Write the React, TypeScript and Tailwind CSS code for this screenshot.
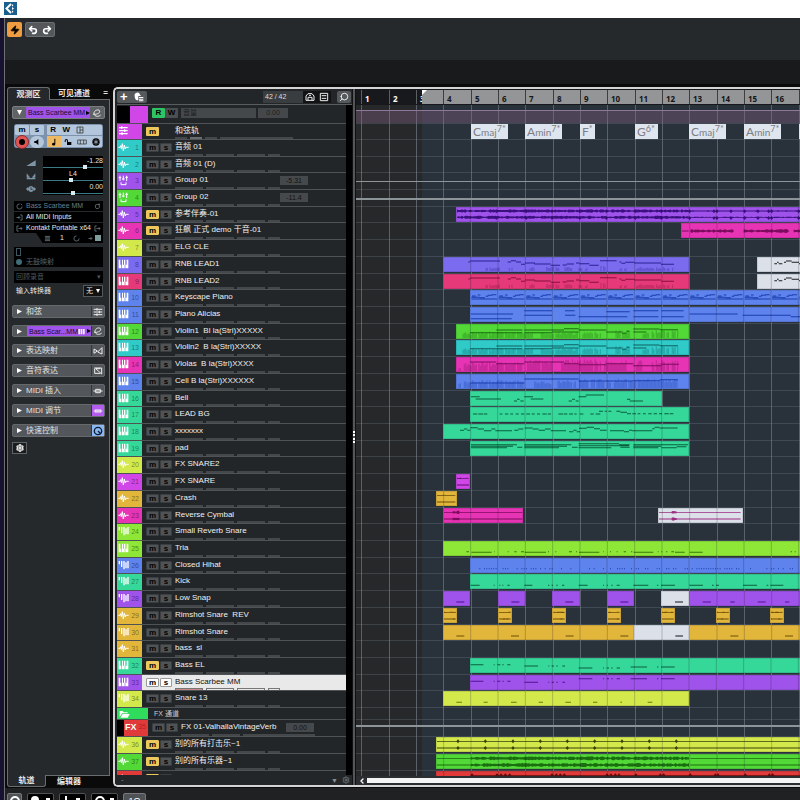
import type { ReactNode } from 'react';
import { ChevronLeft, Redo2, Search, Settings, Undo2, Zap } from 'lucide-react';

// Clip positions are in ticks: three to a pixel, 82 to a bar, bar 4 at tick 40.
const ORIGIN = 74;
const END = 2400;
const px = (tick: number) => Math.round(ORIGIN + tick / 3);
const barTick = (bar: number) => 40 + (bar - 4) * 82;
const BARS = Array.from({ length: 32 }, (_, i) => i + 1);
const LAST_NUMBERED_BAR = 16;

const noise = (n: number) => {
    const v = Math.sin(n * 12.9898) * 43758.5453;
    return v - Math.floor(v);
};

const TONES = {
    cyan: { bg: 'bg-[#30cbc9]', ink: '#0f6160' },
    purple: { bg: 'bg-[#a053ea]', ink: '#4f1694' },
    green: { bg: 'bg-[#52d837]', ink: '#1a6e10' },
    magenta: { bg: 'bg-[#e634b4]', ink: '#7d0c5e' },
    yellow: { bg: 'bg-[#d3e84a]', ink: '#6d7a10' },
    indigo: { bg: 'bg-[#7b6bee]', ink: '#2c2396' },
    crimson: { bg: 'bg-[#e5397a]', ink: '#8a103f' },
    blue: { bg: 'bg-[#5e83ec]', ink: '#1a3fae' },
    mint: { bg: 'bg-[#36d89a]', ink: '#0a5f3d' },
    orchid: { bg: 'bg-[#d046e6]', ink: '#5e0f6c' },
    gold: { bg: 'bg-[#e2b63a]', ink: '#6b4e08' },
    lime: { bg: 'bg-[#8ee636]', ink: '#3d7a0c' },
    red: { bg: 'bg-[#e03a3a]', ink: '#5f0d0d' },
    white: { bg: 'bg-[#dce1e9]', ink: '#1c1e22' },
};
type Tone = keyof typeof TONES;

type Wave = { from: number; to: number; y: number; amp: number };
type Clip = {
    from: number;
    to: number;
    tone?: Tone;
    ink?: string;
    notes?: number[][];
    bars?: number[][];
    waves?: Wave[];
    marks?: number[];
};
type Icon = 'wave' | 'keys' | 'group' | 'drum' | 'chord';
type Track = {
    n: number;
    name: string;
    tone: Tone;
    icon: Icon;
    muted?: boolean;
    selected?: boolean;
    value?: string;
    line?: string;
    clips?: Clip[];
};

const stereo = (from: number, to: number, amp = 2): Wave[] => [
    { from, to, y: 13, amp },
    { from, to, y: 33, amp },
];
const dots = (from: number, to: number, y: number, every: number, keep: number) => {
    const out: number[][] = [];
    for (let x = from; x < to; x += every) if (noise(x) < keep) out.push([x, x + 3, y]);
    return out;
};
const dashes = (from: number, to: number, y: number) => {
    const out: number[][] = [];
    for (let x = from; x < to; x += 16) if (noise(x) < 0.85) out.push([x, x + 7 + Math.round(noise(x + 1) * 7), y]);
    return out;
};

const leadNotes = [
    [115, 120, 15], [120, 210, 12], [233, 243, 15], [243, 258, 11], [258, 273, 15], [273, 285, 22], [285, 315, 18],
    [313, 362, 21], [362, 390, 25], [398, 410, 24], [410, 432, 21], [438, 448, 18], [448, 478, 20], [478, 506, 25],
    [510, 560, 11], [568, 574, 15], [574, 586, 19], [586, 613, 16], [613, 693, 18], [693, 732, 22],
];
const leadBars = [
    [168, 212, 11], [238, 250, 11], [300, 314, 13], [350, 390, 14], [405, 430, 13], [447, 482, 11], [509, 527, 16],
    [570, 578, 11], [584, 590, 11], [620, 695, 11], [700, 732, 11],
];
const leadTail = [
    [1033, 1041, 20], [1041, 1046, 16], [1046, 1057, 20], [1062, 1068, 16], [1068, 1085, 12], [1085, 1107, 16],
    [1107, 1130, 20],
];
const pianoNotes = BARS.slice(4).flatMap((bar) => {
    const t = barTick(bar);
    return [
        [t + 3, t + 80, 27], [t + 3, t + 28, 22], [t + 5, t + 16, 18], [t + 22, t + 30, 15], [t + 28, t + 44, 23],
        [t + 46, t + 54, 19], [t + 52, t + 66, 16], [t + 64, t + 78, 14],
    ];
});
const violinNotes = [
    [121, 200, 26], [200, 278, 18], [200, 278, 26], [284, 367, 26], [284, 403, 18], [367, 447, 24], [403, 447, 14],
    [447, 530, 18], [530, 577, 24], [577, 590, 28], [590, 600, 22], [611, 690, 15], [611, 650, 24], [690, 745, 17],
];
const violinBars = [[100, 310, 19], [335, 445, 18], [460, 515, 18], [555, 600, 25], [640, 660, 18], [668, 745, 24]];
const groove = [
    [123, 161], [192, 195], [203, 212], [218, 222], [233, 242], [284, 325], [356, 359], [366, 373], [380, 384],
    [398, 406], [447, 488], [520, 523], [531, 538], [545, 549], [561, 571], [603, 652], [682, 686], [694, 735],
];
const repeat = (from: number, step: number, count: number, width: number, y: number) =>
    Array.from({ length: count }, (_, i) => [from + i * step, from + i * step + width, y]);

const TRACKS: Track[] = [
    { n: 1, name: '音频 01', tone: 'cyan', icon: 'wave' },
    { n: 2, name: '音频 01 (D)', tone: 'cyan', icon: 'wave' },
    { n: 3, name: 'Group 01', tone: 'purple', icon: 'group', value: '-5.31', line: 'mt-2 h-px' },
    { n: 4, name: 'Group 02', tone: 'green', icon: 'group', value: '-11.4', line: 'mt-2 h-0.5' },
    {
        n: 5, name: '参考伴奏-01', tone: 'purple', icon: 'wave', muted: true,
        clips: [{
            from: 79, to: END, ink: '#3b1180',
            waves: [
                { from: 82, to: 780, y: 12, amp: 5 }, { from: 82, to: 780, y: 31, amp: 5 },
                { from: 780, to: END, y: 12, amp: 2 }, { from: 780, to: END, y: 31, amp: 2 },
            ],
            marks: [200, 290, 367, 450, 530, 617, 695, 780, 853, 862, 904, 945, 985, 1017, 1026, 1107],
        }],
    },
    {
        n: 6, name: '狂飙 正式 demo 干音-01', tone: 'magenta', icon: 'wave', muted: true,
        clips: [{
            from: 752, to: END,
            waves: [
                { from: 755, to: 776, y: 24, amp: 1 }, { from: 780, to: 912, y: 24, amp: 6 },
                { from: 940, to: 1076, y: 24, amp: 6 }, { from: 1090, to: END, y: 24, amp: 5 },
            ],
        }],
    },
    { n: 7, name: 'ELG CLE', tone: 'yellow', icon: 'wave' },
    {
        n: 8, name: 'RNB LEAD1', tone: 'indigo', icon: 'keys',
        clips: [{ from: 39, to: 776, notes: leadNotes, bars: leadBars }, { from: 981, to: END, tone: 'white', notes: leadTail }],
    },
    {
        n: 9, name: 'RNB LEAD2', tone: 'crimson', icon: 'keys',
        clips: [{ from: 39, to: 776, notes: leadNotes, bars: leadBars }, { from: 981, to: END, tone: 'white', notes: leadTail }],
    },
    { n: 10, name: 'Keyscape Piano', tone: 'blue', icon: 'keys', clips: [{ from: 121, to: END, notes: pianoNotes }] },
    {
        n: 11, name: 'Piano Alicias', tone: 'blue', icon: 'keys',
        clips: [{
            from: 121, to: END,
            notes: [
                [124, 250, 21], [124, 246, 35], [284, 367, 11], [284, 367, 25], [406, 435, 11], [406, 437, 25],
                [447, 593, 29], [530, 600, 14], [611, 686, 11], [611, 686, 29], [695, 762, 11], [695, 762, 29],
                [780, 924, 21], [939, 1083, 25], [1083, 1120, 29],
            ],
        }],
    },
    {
        n: 12, name: 'Violin1  Bl la(Stri)XXXXX', tone: 'green', icon: 'keys',
        clips: [{ from: 79, to: 776, notes: violinNotes, bars: violinBars }],
    },
    {
        n: 13, name: 'Violin2  B la(Stri)XXXXX', tone: 'cyan', icon: 'keys',
        clips: [{ from: 79, to: 776, notes: violinNotes, bars: violinBars }],
    },
    {
        n: 14, name: 'Violas  B la(Stri)XXXX', tone: 'magenta', icon: 'keys',
        clips: [{
            from: 79, to: 776,
            notes: [
                [121, 200, 15], [200, 284, 20], [284, 403, 15], [403, 447, 20], [447, 530, 23], [530, 611, 20],
                [611, 695, 26], [695, 748, 22],
            ],
            bars: [[88, 96, 11], [104, 280, 27], [290, 368, 34], [396, 515, 36], [525, 590, 32], [620, 640, 32], [668, 745, 32]],
        }],
    },
    {
        n: 15, name: 'Cell B la(Stri)XXXXXX', tone: 'blue', icon: 'keys',
        clips: [{
            from: 79, to: 776,
            notes: [[121, 284, 27], [284, 447, 15], [447, 611, 21], [611, 690, 20], [690, 745, 17]],
            bars: [[88, 96, 18], [104, 282, 24], [315, 365, 20], [385, 445, 24], [450, 745, 28]],
        }],
    },
    {
        n: 16, name: 'Bell', tone: 'mint', icon: 'keys',
        clips: [{
            from: 121, to: 695,
            notes: [
                [124, 150, 17], [138, 214, 24], [253, 262, 30], [262, 270, 25], [272, 282, 30], [284, 310, 17],
                [303, 341, 24], [417, 427, 30], [427, 436, 25], [438, 447, 30], [447, 470, 17], [468, 523, 12],
                [592, 602, 25], [600, 640, 30],
            ],
        }],
    },
    {
        n: 17, name: 'LEAD BG', tone: 'mint', icon: 'keys',
        clips: [{
            from: 121, to: 776,
            notes: [...dashes(130, 500, 21), [508, 520, 13], [525, 532, 13], [536, 545, 13], [560, 572, 13], [572, 592, 16], ...dashes(592, 750, 20)],
        }],
    },
    {
        n: 18, name: 'xxxxxxx', tone: 'mint', icon: 'keys',
        clips: [{
            from: 39, to: 776,
            notes: [
                [90, 102, 19], [102, 112, 15], [112, 121, 19], [121, 143, 11], [143, 162, 15], [162, 184, 20],
                [184, 196, 15], [196, 246, 20], [253, 265, 19], [265, 280, 15], [284, 308, 12], [308, 326, 15],
                [326, 345, 19], [345, 362, 15], [362, 408, 20], [417, 430, 23], [430, 440, 19], [440, 450, 23],
                [447, 470, 13], [470, 492, 10], [492, 510, 14], [510, 530, 19], [540, 582, 20], [582, 597, 23],
                [597, 606, 19], [606, 667, 20], [667, 674, 14], [674, 688, 10], [688, 743, 12],
            ],
        }],
    },
    {
        n: 19, name: 'pad', tone: 'mint', icon: 'keys',
        clips: [{
            from: 121, to: 776,
            notes: [
                [124, 262, 11], [124, 250, 16], [124, 232, 20], [263, 278, 19], [284, 425, 11], [284, 412, 16],
                [284, 388, 20], [427, 444, 19], [447, 568, 8], [447, 598, 14], [447, 545, 20], [568, 600, 11],
                [572, 600, 19], [611, 775, 11], [611, 695, 16], [611, 686, 20], [695, 741, 20], [741, 770, 17],
            ],
        }],
    },
    { n: 20, name: 'FX SNARE2', tone: 'yellow', icon: 'wave' },
    { n: 21, name: 'FX SNARE', tone: 'orchid', icon: 'wave', clips: [{ from: 79, to: 121, waves: stereo(82, 119) }] },
    { n: 22, name: 'Crash', tone: 'gold', icon: 'wave', clips: [{ from: 17, to: 80, waves: stereo(20, 77) }] },
    {
        n: 23, name: 'Reverse Cymbal', tone: 'magenta', icon: 'wave',
        clips: [
            { from: 39, to: 280, waves: [...stereo(42, 277, 1), ...stereo(68, 92, 5)] },
            { from: 683, to: 938, tone: 'white', ink: '#9c2c80', waves: [...stereo(686, 934, 1), ...stereo(724, 740, 5)] },
        ],
    },
    { n: 24, name: 'Small Reverb Snare', tone: 'lime', icon: 'drum' },
    {
        n: 25, name: 'Tria', tone: 'lime', icon: 'keys',
        clips: [{
            from: 39, to: END,
            notes: [
                [109, 117, 32], [124, 185, 34], [192, 194, 32], [233, 236, 32], [253, 260, 32], [273, 282, 32],
                [284, 348, 34], [354, 357, 32], [376, 379, 32], [417, 426, 32], [438, 441, 32], [447, 508, 34],
                [520, 522, 32], [540, 543, 32], [560, 563, 32], [581, 588, 32], [603, 607, 32], [611, 670, 34],
                [683, 686, 32], [694, 697, 32], [708, 712, 32], [724, 732, 32], [735, 764, 34], [779, 818, 34],
                [1082, 1086, 32], [1094, 1097, 32],
            ],
        }],
    },
    { n: 26, name: 'Closed Hihat', tone: 'blue', icon: 'drum', clips: [{ from: 121, to: END, notes: dots(142, END, 32, 7, 0.55) }] },
    {
        n: 27, name: 'Kick', tone: 'mint', icon: 'drum',
        clips: [{
            from: 121, to: END,
            notes: [
                [123, 150, 34], [192, 195, 34], [209, 212, 34], [218, 221, 34], [233, 240, 34], [284, 308, 34],
                [355, 359, 34], [366, 370, 34], [380, 384, 34], [397, 404, 34], [447, 474, 34], [520, 523, 34],
                [531, 535, 34], [545, 549, 34], [561, 570, 34], [611, 656, 34], [682, 686, 34], [694, 736, 34],
                [779, 820, 34], [847, 852, 34], [859, 868, 34], [940, 982, 34], [1011, 1016, 34], [1022, 1061, 34],
            ],
        }],
    },
    {
        n: 28, name: 'Low Snap', tone: 'purple', icon: 'drum',
        clips: [
            ...[39, 203, 367, 531].map((t) => ({ from: t, to: t + 82, notes: [[t + 40, t + 64, 33]] })),
            { from: 694, to: 776, tone: 'white', notes: [[736, 760, 33]] },
            { from: 776, to: END, notes: [[817, 842, 33], [900, 913, 33], [982, 1006, 33], [1064, 1077, 33]] },
        ],
    },
    {
        n: 29, name: 'Rimshot Snare  REV', tone: 'gold', icon: 'wave',
        clips: [39, 203, 367, 531, 694, 858, 1021].map((t) => ({ from: t, to: t + 42, waves: stereo(t + 3, t + 38) })),
    },
    {
        n: 30, name: 'Rimshot Snare', tone: 'gold', icon: 'drum',
        clips: [
            { from: 39, to: 612, notes: repeat(79, 164, 4, 24, 33) },
            { from: 612, to: 776, tone: 'white', notes: [[736, 759, 33]] },
            { from: 776, to: END, notes: repeat(900, 164, 6, 24, 33) },
        ],
    },
    { n: 31, name: 'bass  sl', tone: 'gold', icon: 'wave' },
    {
        n: 32, name: 'Bass EL', tone: 'mint', icon: 'keys', muted: true,
        clips: [{ from: 121, to: END, notes: groove.map(([a, b]) => [a, b, a < 280 ? 20 : a < 440 ? 24 : a < 600 ? 30 : 27]) }],
    },
    {
        n: 33, name: 'Bass Scarbee MM', tone: 'purple', icon: 'keys', selected: true,
        clips: [{ from: 121, to: END, notes: groove.map(([a, b]) => [a, b, a < 280 ? 19 : a < 440 ? 22 : 11]) }],
    },
    {
        n: 34, name: 'Snare 13', tone: 'yellow', icon: 'drum',
        clips: [{
            from: 39, to: 777,
            notes: [
                [79, 96, 34], [161, 173, 34], [243, 260, 34], [326, 339, 34], [406, 423, 34], [489, 502, 34],
                [571, 576, 34], [653, 667, 34],
            ],
        }],
    },
];

const FX_TRACK: Track = { n: 35, name: 'FX 01-ValhallaVintageVerb', tone: 'red', icon: 'wave', value: '0.00', line: 'mt-[5px] h-0.5' };

const SUBMIX: Track[] = [
    {
        n: 36, name: '别的所有打击乐~1', tone: 'yellow', icon: 'wave', muted: true,
        clips: [{ from: 17, to: END, ink: '#3a420a', waves: stereo(20, END, 1), marks: [83, 165, 248, 330, 411, 493, 575, 657, 738] }],
    },
    {
        n: 37, name: '别的所有乐器~1', tone: 'green', icon: 'wave', muted: true,
        clips: [{ from: 17, to: END, waves: [...stereo(20, 121, 1), ...stereo(121, 780, 6), ...stereo(780, END, 1)] }],
    },
    {
        n: 38, name: 'Kick71', tone: 'red', icon: 'wave', muted: true,
        clips: [{ from: 17, to: END, waves: stereo(121, END, 1), marks: [125, 200, 212, 225, 238, 365, 378, 390, 402, 530, 542, 555, 566, 617, 690, 700, 780, 855, 863, 945, 1017, 1027] }],
    },
];

// Tracks average a bit under 17px, so two rows in seven are a pixel shorter.
const rowHeight = (n: number) => (n < 35 && [1, 4].includes((n - 1) % 7) ? 'h-4' : 'h-[17px]');

const wavePath = ({ from, to, y, amp }: Wave) => {
    let top = `M${from} ${y}`;
    let bottom = '';
    for (let x = from; x <= to; x += 5) {
        const a = Math.max(1.3, amp * (0.3 + 0.7 * noise(x + y)));
        top += `L${x} ${(y - a).toFixed(1)}`;
        bottom = `L${x} ${(y + a).toFixed(1)}` + bottom;
    }
    return top + bottom + 'Z';
};

const ClipView = ({ clip, tone }: { clip: Clip; tone: Tone }) => {
    const { bg, ink } = TONES[clip.tone ?? tone];
    const color = clip.ink ?? ink;
    const left = px(clip.from);
    const width = px(clip.to) - left;
    const marks = clip.marks ?? [];
    return (
        <div className={`absolute top-0 h-[15px] ${bg}`} style={{ left, width }}>
            <svg className="block" width={width} height={15} viewBox={`${clip.from} 0 ${width * 3} 45`} preserveAspectRatio="none">
                {clip.bars?.map(([from, to, h]) => {
                    let d = '';
                    for (let x = from; x < to; x += 4) {
                        if (noise(x * 3) > 0.12) d += `M${x} 42V${Math.round(42 - h * (0.55 + 0.45 * noise(x)))}`;
                    }
                    return <path key={from} d={d} stroke={color} strokeWidth={3.4} opacity={0.32} />;
                })}
                {clip.waves?.map((w) => <path key={`${w.from}-${w.y}`} d={wavePath(w)} fill={color} />)}
                {marks.map((x) => (
                    <path key={x} d={`M${x - 5} 13l5-6 5 6-5 6ZM${x - 5} 33l5-6 5 6-5 6Z`} fill={color} />
                ))}
                <path d={clip.notes?.map(([a, b, y]) => `M${a} ${y}H${b}`).join('')} stroke={color} strokeWidth={3.2} fill="none" />
                {BARS.map(barTick).filter((t) => t > clip.from + 4 && t < clip.to - 4).map((t) => (
                    <path key={t} d={`M${t} 0V45`} stroke="#101020" strokeWidth={3} opacity={0.22} />
                ))}
                <rect x={clip.from + 1} y={1} width={width * 3 - 2} height={43} fill="none" stroke="#101020" strokeWidth={2} opacity={0.18} />
            </svg>
        </div>
    );
};

const TrackIcon = ({ icon }: { icon: Icon }) => (
    <svg className="ml-px mt-px h-3 w-[11px] shrink-0" viewBox="0 0 33 36" fill="none" stroke="#fff" strokeWidth={3}>
        {icon === 'wave' && <path d="M1 19h5l2-5 2 9 3-15 3 22 3-18 3 12 2-6 2 1h6" strokeWidth={3} />}
        {icon === 'keys' && <path fill="#fff" stroke="none" d="M2 5h5v15h3v11H2zM12 5h3v15h3V5h4v15h-2v11h-8zM26 5h5v26h-9V20h4z" />}
        {icon === 'drum' && <path d="M4 6v10M11 6v18M18 6v25M24 10v18M30 6v22" strokeWidth={4} />}
        {icon === 'group' && <path d="M6 5v16M16 5v14M26 5v16M2 11h8M12 15h8M22 10h8M9 25v7h15v-7" />}
        {icon === 'chord' && <path d="M3 8h26M3 17h26M3 26h26M11 4v8M20 13v8M12 22v8" strokeWidth={4} />}
    </svg>
);

const MuteSolo = ({ muted, selected, name }: { muted?: boolean; selected?: boolean; name: string }) => {
    const idle = selected ? 'bg-white border-[#999]' : 'bg-[#505355] border-[#3b3e40]';
    return (
        <div className="mt-[3px] flex h-[9px] gap-px">
            <button aria-label={`Mute ${name}`} className={`flex w-[13px] items-center justify-center rounded-[1px] border text-[8px] leading-none font-bold text-black ${muted ? 'bg-[#ecc85c] border-[#ecc85c]' : idle}`}>
                m
            </button>
            <button aria-label={`Solo ${name}`} className={`flex w-3 items-center justify-center rounded-[1px] border text-[8px] leading-none font-bold text-black ${idle}`}>
                s
            </button>
        </div>
    );
};

const ValueBox = ({ value }: { value: string }) => (
    <span className="mt-[3px] h-[9px] w-7 bg-[#46494b] text-center text-[7px] leading-[9px] text-[#111]">{value}</span>
);

const Strips = ({ selected }: { selected?: boolean }) => (
    <div className="absolute bottom-0 left-[58px] flex h-0.5 gap-[3px]">
        <i className={`w-7 ${selected ? 'border-x border-t border-[#777] bg-[#c98a8a]' : 'bg-[#45484a]'}`} />
        <i className={`w-7 ${selected ? 'border-x border-t border-[#777]' : 'bg-[#45484a]'}`} />
        <i className={`w-7 ${selected ? 'border-x border-t border-[#777]' : 'bg-[#45484a]'}`} />
        <i className={`w-3 ${selected ? 'border-x border-t border-[#777]' : 'bg-[#45484a]'}`} />
    </div>
);

const TrackRow = ({ track }: { track: Track }) => (
    <div className={`relative flex shrink-0 border-t border-[#505356] ${rowHeight(track.n)} ${track.selected ? 'bg-[#e9e9e9] text-[#111]' : 'text-[#f0f0f0]'}`}>
        <div className={`flex w-[25px] justify-between pr-[3px] ${TONES[track.tone].bg}`}>
            <TrackIcon icon={track.icon} />
            <span className="text-[7px] leading-[15px] text-black/45">{track.n}</span>
        </div>
        <div className="ml-1 flex">
            <MuteSolo muted={track.muted} selected={track.selected} name={track.name} />
        </div>
        <span className="ml-[3px] grow text-[8px] leading-[13px] whitespace-pre">{track.name}</span>
        {track.value && <div className="mr-[38px] flex"><ValueBox value={track.value} /></div>}
        <Strips selected={track.selected} />
    </div>
);

const TrackList = () => (
    <section className="flex w-[237px] shrink-0 flex-col bg-[#232628] pl-0.5">
        <header className="flex h-4 shrink-0 items-center border-b border-[#5a5d60] pr-px">
            <div className="flex h-3 w-[30px] items-center justify-around rounded-xs bg-[#56595c] text-white">
                <button aria-label="Add track" className="text-[13px] leading-none font-bold">+</button>
                <button aria-label="Track presets">
                    <svg className="h-2.5 w-2.5" viewBox="0 0 30 30" fill="#fff">
                        <path d="M2 12a8 8 0 0 1 16-4l3 4h-8v13H9c-5-2-7-7-7-13z" />
                        <path d="M15 15h13v3H15zM15 20h13v3H15zM15 25h13v3H15z" />
                    </svg>
                </button>
            </div>
            <span className="ml-auto h-3 w-10 bg-[#3a3d40] pl-0.5 text-[7px] leading-3 text-[#ddd]">42 / 42</span>
            <div className="flex h-3 w-7 items-center justify-around bg-[#111315]">
                <button aria-label="Track visibility">
                    <svg className="h-2.5 w-2.5" viewBox="0 0 30 30" fill="none" stroke="#eee" strokeWidth={3}>
                        <path d="M3 25V12l6-7h12l6 7v13zM9 25v-9h12v9M12 10h6" />
                    </svg>
                </button>
                <button aria-label="Track divider">
                    <svg className="h-2.5 w-2.5" viewBox="0 0 30 30" fill="none" stroke="#eee" strokeWidth={3}>
                        <path d="M4 4h22v22H4zM8 11h14M8 19h14" />
                    </svg>
                </button>
            </div>
            <button aria-label="Find track" className="ml-1.5 flex h-3 w-3.5 items-center justify-center rounded-xs bg-[#56595c] text-white">
                <Search className="h-2.5 w-2.5 -scale-x-100" />
            </button>
        </header>
        <div className="flex min-h-0 grow overflow-hidden">
            <div className="flex min-w-0 grow flex-col">
                <div className="flex h-[18px] shrink-0 bg-[#232628] pt-px">
                    <div className="w-[13px] bg-black" />
                    <div className="w-[18px] bg-[#d046e6]" />
                    <button aria-label="Read automation" className="mt-0.5 ml-1 h-2.5 w-[13px] rounded-[1px] bg-[#2fc463] text-[8px] leading-[10px] font-bold text-black">R</button>
                    <button aria-label="Write automation" className="mt-0.5 h-2.5 w-[13px] rounded-[1px] bg-[#4c4f51] text-[8px] leading-[10px] font-bold text-black">W</button>
                    <span className="mt-0.5 ml-[3px] h-2.5 w-[75px] bg-[#45484a] pl-0.5 text-[7px] leading-[10px] text-[#1c1e1f]">音量</span>
                    <span className="mt-0.5 ml-0.5 h-2.5 w-[30px] bg-[#45484a] text-center text-[7px] leading-[10px] text-[#1c1e1f]">0.00</span>
                </div>
                <div className="relative flex h-4 shrink-0 border-t border-[#505356]">
                    <div className="w-[25px] bg-[#d046e6]"><TrackIcon icon="chord" /></div>
                    <button aria-label="Mute chord track" className="mt-[3px] ml-1 h-[9px] w-[13px] rounded-[1px] bg-[#ecc85c] text-[8px] leading-[8px] font-bold text-black">m</button>
                    <span className="ml-4 text-[8px] leading-[13px] text-[#f0f0f0]">和弦轨</span>
                    <div className="absolute bottom-0 left-[58px] flex h-0.5 gap-[3px]">
                        <i className="w-3 bg-[#45484a]" />
                        <i className="w-3 bg-[#6a6d70]" />
                        <i className="w-3 bg-[#45484a]" />
                        <i className="w-[73px] bg-[#45484a]" />
                    </div>
                </div>
                {TRACKS.map((t) => <TrackRow key={t.n} track={t} />)}
                <div className="flex h-3 shrink-0 border-t border-[#505356]">
                    <div className="flex w-[31px] items-center bg-[#2fdc5c] pl-0.5">
                        <svg className="h-2.5 w-[11px]" viewBox="0 0 33 30" fill="#fff">
                            <path d="M2 25V6h9l3 4h12v3H9z" />
                            <path d="M11 15h21l-6 11H4z" />
                        </svg>
                    </div>
                    <span className="ml-1.5 text-[7px] leading-[11px] text-[#ccc]">FX 通道</span>
                </div>
                <div className="relative flex h-[17px] shrink-0 border-t border-[#505356] text-[#f0f0f0]">
                    <div className="w-[7px] bg-black" />
                    <div className="flex w-6 justify-between bg-[#e03a3a] pr-0.5 pl-px">
                        <b className="text-[9px] leading-[14px] text-white">FX</b>
                        <span className="text-[7px] leading-[14px] text-black/30">35</span>
                    </div>
                    <div className="ml-1"><MuteSolo name={FX_TRACK.name} /></div>
                    <span className="ml-[3px] w-[105px] text-[8px] leading-[13px] whitespace-nowrap">{FX_TRACK.name}</span>
                    <ValueBox value="0.00" />
                    <div className="absolute bottom-0 left-16 flex h-0.5 gap-[3px]">
                        <i className="w-7 bg-[#45484a]" />
                        <i className="w-7 bg-[#45484a]" />
                        <i className="w-[72px] bg-[#45484a]" />
                    </div>
                </div>
                {SUBMIX.map((t) => <TrackRow key={t.n} track={t} />)}
            </div>
            <div className="w-1.5 shrink-0 bg-black" />
        </div>
        <footer className="flex h-2.5 shrink-0 items-center pr-0.5 text-[#8a8d90]">
            <span className="ml-1 text-[8px] leading-none">-</span>
            <span className="ml-auto text-[7px] leading-none">▼</span>
            <button aria-label="Track list settings" className="ml-1"><Settings className="h-2 w-2" /></button>
        </footer>
    </section>
);

const CHORDS = [
    { bar: 5, root: 'C', kind: 'maj', ext: '7', width: 'w-[37px]' },
    { bar: 7, root: 'A', kind: 'min', ext: '7', width: 'w-[37px]' },
    { bar: 9, root: 'F', kind: '', ext: '', width: 'w-[15px]' },
    { bar: 11, root: 'G', kind: '', ext: '6', width: 'w-[23px]' },
    { bar: 13, root: 'C', kind: 'maj', ext: '7', width: 'w-[37px]' },
    { bar: 15, root: 'A', kind: 'min', ext: '7', width: 'w-[37px]' },
];

const Lane = ({ height, children }: { height: string; children?: ReactNode }) => (
    <div className={`relative shrink-0 border-t border-[#8090a0]/25 ${height}`}>{children}</div>
);

const TrackLane = ({ track }: { track: Track }) => (
    <Lane height={rowHeight(track.n)}>
        {track.line && <div className={`bg-[#8d9599] ${track.line}`} />}
        {track.clips?.map((c) => <ClipView key={c.from} clip={c} tone={track.tone} />)}
    </Lane>
);

const Timeline = () => (
    <section className="flex min-w-0 grow flex-col overflow-hidden bg-[#29323a]">
        <div className="relative flex h-4 shrink-0 overflow-hidden border-y border-[#16181b]">
            <div className="w-[66px] bg-[#17191c]" />
            <div className="grow bg-[#939597]" />
            {BARS.map((bar) => (
                <span
                    key={bar}
                    className={`absolute bottom-0 h-3.5 border-l pl-[3px] font-['Noto_Sans'] text-[8px] leading-[18px] font-bold ${bar < 4 ? 'border-[#5c6064] text-white' : 'border-[#3c3e40] text-[#141618]'}`}
                    style={{ left: px(barTick(bar)) }}
                >
                    {bar <= LAST_NUMBERED_BAR && bar}
                </span>
            ))}
            <div className="absolute inset-y-0 left-[66px] w-[5px] bg-[#939597]">
                <div className="h-[5px] bg-white [clip-path:polygon(0_0,100%_0,0_100%)]" />
            </div>
        </div>
        <div className="relative flex min-h-0 grow flex-col overflow-hidden">
            <div className="absolute inset-y-0 left-0 w-[66px] bg-[#262829]" />
            {BARS.map((bar) => (
                <div key={bar} className="absolute inset-y-0 w-px bg-[#59626a]" style={{ left: px(barTick(bar)) }} />
            ))}
            <div className="relative flex h-[18px] shrink-0 flex-col pt-[5px]">
                <div className="grow border-t border-[#8d789a] bg-[#8e6490]/35" />
            </div>
            <Lane height="h-4">
                {CHORDS.map(({ bar, root, kind, ext, width }) => (
                    <div
                        key={bar}
                        className={`absolute top-0 flex h-[15px] items-baseline bg-[#dfe5ee] pl-0.5 font-[Lato] leading-[15px] text-[#7b7e85] ${width}`}
                        style={{ left: px(barTick(bar)) }}
                    >
                        <span className="text-[12px]">{root}</span>
                        <span className="text-[10px]">{kind}</span>
                        <sup className="text-[9px]">{ext}*</sup>
                    </div>
                ))}
                <div className="absolute top-0 h-[15px] w-[15px] bg-[#dfe5ee]" style={{ left: px(barTick(17)) }} />
            </Lane>
            {TRACKS.map((t) => <TrackLane key={t.n} track={t} />)}
            <Lane height="h-3" />
            <TrackLane track={FX_TRACK} />
            {SUBMIX.map((t) => <TrackLane key={t.n} track={t} />)}
        </div>
        <div className="flex h-[9px] shrink-0 items-center bg-[#2b2e31]">
            <button aria-label="Scroll left" className="w-[11px] pl-0.5 text-white"><ChevronLeft className="h-2 w-2" strokeWidth={4} /></button>
            <div className="h-[5px] grow bg-[#f4f4f4]" />
        </div>
    </section>
);

const SLIDERS = [
    { label: 'Volume', value: '-1.28', pos: 72, icon: 'M1 24L29 7v17z' },
    { label: 'Pan', value: 'L4', pos: 47, icon: 'M2 7l11 13H2zM28 7L17 20h11zM2 21h26v4H2z' },
    { label: 'Delay', value: '0.00', pos: 50, icon: 'M0 15l6-6v12zM30 15l-6-6v12zM15 6a9 9 0 1 0 .1 0zm1 3v6h4v2h-6v-8z' },
];

const EDIT_ICON = 'M3 18c8 3 22-2 20-9-3-7-17-2-17 7 1 11 14 11 20 5';
const SECTIONS = [
    { label: '和弦', tint: '', icon: 'M2 7h26M2 15h26M2 23h26M12 3v8M19 11v8M12 19v8' },
    { label: 'Bass Scar...MM', tint: '', icon: EDIT_ICON },
    { label: '表达映射', tint: '', icon: 'M3 9l10 6-10 7zM14 18L27 5v19z' },
    { label: '音符表达', tint: '', icon: 'M4 6h22v18L8 8h14M5 8v14h17' },
    { label: 'MIDI 插入', tint: '', icon: 'M1 15h7M22 15h7M8 10h14v10H8zM8 15h14' },
    { label: 'MIDI 调节', tint: 'bg-[#b45cf0]', icon: 'M2 15h26M7 10v10M12 9v12M18 9v12M23 10v10' },
    { label: '快速控制', tint: 'bg-[#8ab8f4]', icon: '' },
];

const PanelIcon = ({ d }: { d: string }) => (
    <svg className="h-2.5 w-2.5" viewBox="0 0 30 30" fill="none" stroke="#eee" strokeWidth={3}><path d={d} /></svg>
);

const Section = ({ label, tint, icon }: (typeof SECTIONS)[number]) => {
    const linked = label.startsWith('Bass');
    return (
        <div className={`flex rounded-xs border border-[#66696c] bg-[#53565a] text-[8px] leading-[11px] text-[#e2e2e2] ${linked ? 'h-3' : 'h-[13px]'}`}>
            <button className="flex min-w-0 grow items-center text-left">
                <svg className="mx-1 h-[5px] w-[5px] shrink-0" viewBox="0 0 5 5"><path d="M0 0l5 2.5L0 5z" fill="#fff" /></svg>
                {linked ? (
                    <span className="ml-px flex h-full grow items-center bg-[#a053ea] pl-0.5 text-[7px] whitespace-nowrap text-[#1c0c30]">
                        {label}
                        <svg className="h-[7px] w-[7px] shrink-0" viewBox="0 0 24 24" fill="#eee"><path d="M1 3h6v18H1zM9 3h6v18H9zM17 3h6v18h-6z" /></svg>
                        <svg className="ml-auto h-1 w-1 shrink-0" viewBox="0 0 5 5"><path d="M0 0l5 2.5L0 5z" fill="#000" /></svg>
                    </span>
                ) : label}
            </button>
            <button aria-label={`Bypass ${label}`} className={`flex w-[13px] shrink-0 items-center justify-center border-l border-[#34373a] ${tint}`}>
                {icon ? <PanelIcon d={icon} /> : (
                    <svg className="h-2.5 w-2.5" viewBox="0 0 30 30" fill="none" stroke="#0f1c30" strokeWidth={4}>
                        <circle cx="15" cy="15" r="11" /><path d="M15 15l9 9" />
                    </svg>
                )}
            </button>
        </div>
    );
};

const PanelDim = ({ d }: { d: string }) => (
    <svg className="h-[7px] w-[7px] shrink-0" viewBox="0 0 30 30" fill="none" stroke="#7a8c96" strokeWidth={3}><path d={d} /></svg>
);

const Inspector = () => (
    <aside className="mr-[3px] ml-0.5 flex w-[103px] shrink-0 flex-col pt-[3px] text-[#e6e6e6]">
        <div className="flex h-[13px] shrink-0 text-[8px] leading-[13px] font-bold">
            <button className="w-[43px] rounded-t-[3px] border-x border-t border-[#6a6d70] bg-[#26292c]">观测区</button>
            <div className="flex grow items-center border-b border-[#6a6d70]">
                <button className="ml-2">可见通道</button>
                <button aria-label="Inspector menu" className="ml-auto pr-0.5 leading-none">=</button>
            </div>
        </div>
        <div className="flex min-h-0 grow flex-col overflow-hidden border-x border-[#6a6d70] bg-[#26292c] px-1 pt-1.5">
            <div className="flex h-[13px] shrink-0 items-center rounded-xs border border-[#7a7d80] bg-[#606366]">
                <button aria-label="Collapse" className="flex w-[13px] justify-center">
                    <svg className="h-[5px] w-[5px]" viewBox="0 0 5 5"><path d="M0 0h5L2.5 5z" fill="#fff" /></svg>
                </button>
                <span className="flex h-full min-w-0 grow items-center bg-[#a053ea] pl-0.5 text-[7px] leading-none whitespace-nowrap text-[#1c0c30]">
                    Bass Scarbee MM
                    <svg className="ml-auto h-1 w-1 shrink-0" viewBox="0 0 5 5"><path d="M0 0l5 2.5L0 5z" fill="#000" /></svg>
                </span>
                <button aria-label="Edit channel" className="flex w-3.5 shrink-0 justify-center"><PanelIcon d={EDIT_ICON} /></button>
            </div>

            <div className="mx-0.5 mt-[5px] flex h-6 shrink-0 flex-col gap-px rounded-[3px] bg-[#7d93ad] p-px text-[8px] leading-[10px] font-bold text-black">
                <div className="flex h-2.5 gap-px">
                    <button className="w-3.5 rounded-[1px] bg-[#b4c6dc]">m</button>
                    <button className="w-3.5 rounded-[1px] bg-[#b4c6dc]">s</button>
                    <div className="ml-0.5 flex grow justify-around rounded-[1px] bg-[#b4c6dc]">
                        <button>R</button>
                        <button>W</button>
                        <button aria-label="Lanes">
                            <svg className="h-2 w-2" viewBox="0 0 24 24" fill="none" stroke="#222" strokeWidth={2}><path d="M3 3h18v18H3zM12 3v18M12 12h9" /></svg>
                        </button>
                        <i className="w-2" />
                    </div>
                </div>
                <div className="flex h-[11px] items-center gap-px">
                    <button aria-label="Record enable" className="-my-px flex h-[14px] w-[14px] shrink-0 items-center justify-center rounded-full border border-[#8c2a2a] bg-[#e25555]">
                        <i className="h-1.5 w-1.5 rounded-full bg-black" />
                    </button>
                    <button aria-label="Monitor" className="flex h-3 w-3.5 items-center justify-center rounded-full bg-[#b4c6dc]">
                        <svg className="h-2 w-2" viewBox="0 0 24 24"><path d="M4 9h5l7-6v18l-7-6H4z" /></svg>
                    </button>
                    <div className="ml-0.5 flex h-full grow items-center rounded-[1px] bg-[#b4c6dc]">
                        <button aria-label="Musical time base" className="flex h-full w-3.5 items-center justify-center bg-[#efb962]">
                            <svg className="h-2 w-2" viewBox="0 0 24 24"><path d="M13 2h3v17a5 4 0 1 1-3-4z" /></svg>
                        </button>
                        <button aria-label="Lock" className="flex grow justify-center">
                            <svg className="h-2 w-2" viewBox="0 0 24 24"><path d="M9 12h13v9H9zM2 12V8a5 5 0 0 1 10 0v4H9V8a2 2 0 0 0-4 0v4z" /></svg>
                        </button>
                        <button aria-label="Lane display" className="flex grow justify-center">
                            <svg className="h-2 w-2.5" viewBox="0 0 30 24" fill="none" stroke="#222" strokeWidth={2}><path d="M2 6h26v12H2zM10 6v12M20 6v12" /></svg>
                        </button>
                        <button aria-label="Freeze" className="flex grow justify-center">
                            <svg className="h-2 w-2" viewBox="0 0 24 24"><circle cx="12" cy="12" r="11" /><path d="M12 4v16M5 8l14 8M19 8L5 16" stroke="#b4c6dc" strokeWidth={2} /></svg>
                        </button>
                    </div>
                </div>
            </div>

            <div className="mx-0.5 mt-2 shrink-0">
                {SLIDERS.map((s) => (
                    <label key={s.label} className="flex h-[13px] items-center text-[7px] leading-[8px]">
                        <svg className="ml-3 h-2.5 w-2.5 shrink-0" viewBox="0 0 30 30"><path d={s.icon} fill="#7f95a6" /></svg>
                        <span className="ml-[7px] flex h-full min-w-0 grow flex-col justify-end bg-black">
                            <span className={s.value === 'L4' ? 'text-center' : 'text-right'}>{s.value}</span>
                            <input
                                type="range"
                                aria-label={s.label}
                                defaultValue={s.pos}
                                className="h-1 w-full appearance-none bg-[linear-gradient(#3a7a84,#3a7a84)] bg-[length:100%_1px] bg-center bg-no-repeat [&::-webkit-slider-thumb]:h-1 [&::-webkit-slider-thumb]:w-1 [&::-webkit-slider-thumb]:appearance-none [&::-webkit-slider-thumb]:bg-[#dceaf2]"
                            />
                        </span>
                    </label>
                ))}
            </div>

            <div className="mx-0.5 mt-1.5 shrink-0 text-[7px] leading-[10px]">
                <div className="mb-px flex h-2.5 items-center bg-black px-0.5 text-[#62808f]">
                    <PanelDim d="M15 4a11 11 0 1 0 11 11M20 3l6 6" /><span className="ml-[3px] grow">Bass Scarbee MM</span><PanelDim d="M22 10a9 9 0 1 1-7-4h10M22 2v8" />
                </div>
                <div className="mb-px flex h-2.5 items-center bg-black px-0.5">
                    <PanelDim d="M2 15h14M11 9l6 6-6 6M18 4h8v22h-8" /><span className="ml-[3px]">All MIDI Inputs</span>
                </div>
                <div className="flex h-2.5 items-center bg-black px-0.5">
                    <PanelDim d="M12 4H4v22h8M10 15h16M20 9l6 6-6 6" /><span className="ml-[3px] grow whitespace-nowrap">Kontakt Portable x64</span><PanelDim d="M12 4H4v22h8M10 15h16M20 9l6 6-6 6" />
                </div>
                <div className="ml-[22px] flex h-2.5 items-center bg-black px-2 [clip-path:polygon(0_0,100%_0,100%_100%,10%_100%)]">
                    <PanelDim d="M4 6h22M4 12h22M4 18h22M4 24h22" /><span className="mx-auto">1</span><PanelDim d="M15 4a11 11 0 1 0 11 11" /><i className="w-2" /><PanelDim d="M2 15h14M11 9l6 6-6 6" /><i className="-mr-1.5 h-1.5 w-1.5 bg-[#7f9c9c]" />
                </div>
                <div className="mt-1 flex h-2.5 items-center bg-black px-0.5"><i className="h-2 w-[5px] border border-[#3f565f]" /></div>
                <div className="flex h-2.5 items-center bg-black px-0.5 text-[#55656c]">
                    <i className="h-1.5 w-1.5 rounded-full bg-[#3f6d78]" /><span className="ml-1">无鼓映射</span>
                </div>
                <div className="mt-1 flex h-3 items-center justify-between bg-black px-0.5 text-[#4c575c]"><span>回顾录音</span><span>▾</span></div>
                <div className="mt-0.5 flex h-3 items-center justify-between pl-0.5">
                    <label htmlFor="transformer">输入转换器</label>
                    <span className="flex h-3 w-5 items-center border border-[#55585a] bg-[#111]">
                        <select id="transformer" className="w-full appearance-none pl-0.5 text-[7px] leading-[10px]"><option>无</option></select>
                        <svg className="mr-0.5 h-1 w-1 shrink-0" viewBox="0 0 5 5"><path d="M0 0h5L2.5 5z" fill="#fff" /></svg>
                    </span>
                </div>
            </div>

            <div className="mt-2 flex flex-col gap-[7px]">
                {SECTIONS.map((s) => <Section key={s.label} {...s} />)}
            </div>
            <button aria-label="Inspector settings" className="mt-[5px] flex h-3 w-[15px] shrink-0 items-center justify-center border border-[#606366] bg-[#1a1c1e]">
                <Settings className="h-2 w-2" strokeWidth={4} />
            </button>
        </div>
        <div className="mb-px flex h-3 shrink-0 text-[8px] leading-[12px] font-bold">
            <button className="w-[39px] rounded-b-[3px] border-x border-b border-[#6a6d70] bg-[#26292c]">轨道</button>
            <div className="grow border-t border-[#6a6d70] pl-[11px]"><button>编辑器</button></div>
        </div>
    </aside>
);

const App = () => (
    <div className="flex h-screen w-full overflow-hidden bg-[#17122f] font-['Liberation_Sans','Noto_Sans_CJK_SC',sans-serif] select-none">
        <div className="flex min-w-0 grow flex-col pl-1">
            <header className="-ml-1 flex h-[18px] shrink-0 bg-white pl-1">
                <svg className="mt-0.5 h-[13px] w-[13px]" viewBox="0 0 26 26">
                    <rect width="26" height="26" fill="#1b5f8e" />
                    <path d="M14 4L5 13l9 9" stroke="#fff" strokeWidth={4} fill="none" />
                    <path d="M16 10l4 3-4 3zM16 4l3 3-3 2zM16 22l3-3-3-2z" fill="#fff" />
                </svg>
            </header>
            <div className="flex min-h-0 grow flex-col border-l border-[#6d6f74] bg-[#0a0a0b]">
                <nav className="flex h-[42px] shrink-0 items-start gap-[3px] bg-[#26292b] pt-1 pl-0.5">
                    <button aria-label="Activate project" className="flex h-[15px] w-[15px] items-center justify-center rounded-xs bg-[#f09c42]">
                        <Zap className="h-2.5 w-2.5 fill-black text-black" />
                    </button>
                    <div className="flex h-[15px] w-[30px] items-center justify-around rounded-xs border border-[#6b6e71] bg-[#55585b] text-white">
                        <button aria-label="Undo"><Undo2 className="h-2.5 w-2.5" strokeWidth={4} /></button>
                        <button aria-label="Redo"><Redo2 className="h-2.5 w-2.5" strokeWidth={4} /></button>
                    </div>
                </nav>
                <div className="h-6 shrink-0 bg-[#191a1b]" />
                <main className="flex min-h-0 grow">
                    <Inspector />
                    <div className="mt-[3px] mb-px flex min-w-0 grow overflow-hidden rounded-l-[5px] border-y-2 border-l-2 border-[#d4d4d4]">
                        <TrackList />
                        <div className="flex w-1 shrink-0 flex-col justify-center border-x border-[#111] bg-[#54575a]">
                            <i className="h-3 w-0.5 border-l-2 border-dotted border-white" />
                        </div>
                        <Timeline />
                    </div>
                </main>
                <nav className="flex h-3 shrink-0 items-start gap-[5px] overflow-hidden bg-[#1f2123] pt-[5px] pl-0.5 text-white">
                    <button aria-label="Inspector setup" className="flex h-4 w-[15px] justify-center rounded-xs border border-[#77797c] bg-[#505356] pt-0.5"><i className="h-2.5 w-2.5 rounded-full border-2 border-white" /></button>
                    <button aria-label="Draw tool" className="flex h-4 w-[27px] justify-around rounded-xs border border-[#505356] bg-black pt-0.5"><i className="h-2 w-2 rounded-full bg-white" /><i className="mt-0.5 h-0.5 w-1 bg-white" /></button>
                    <button aria-label="Snap" className="flex h-4 w-[27px] justify-around rounded-xs border border-[#505356] bg-black pt-0.5"><i className="h-3 w-0.5 bg-white" /><i className="mt-0.5 h-0.5 w-1 bg-white" /></button>
                    <button aria-label="Quantize" className="flex h-4 w-[27px] justify-around rounded-xs border border-[#505356] bg-black pt-0.5"><i className="h-2.5 w-2.5 rounded-full border-2 border-white" /><i className="mt-0.5 h-0.5 w-1 bg-white" /></button>
                    <button className="h-4 w-[23px] rounded-xs border border-[#77797c] bg-[#505356] text-[9px] leading-[12px]">1Q</button>
                </nav>
            </div>
        </div>
    </div>
);

export default App;
